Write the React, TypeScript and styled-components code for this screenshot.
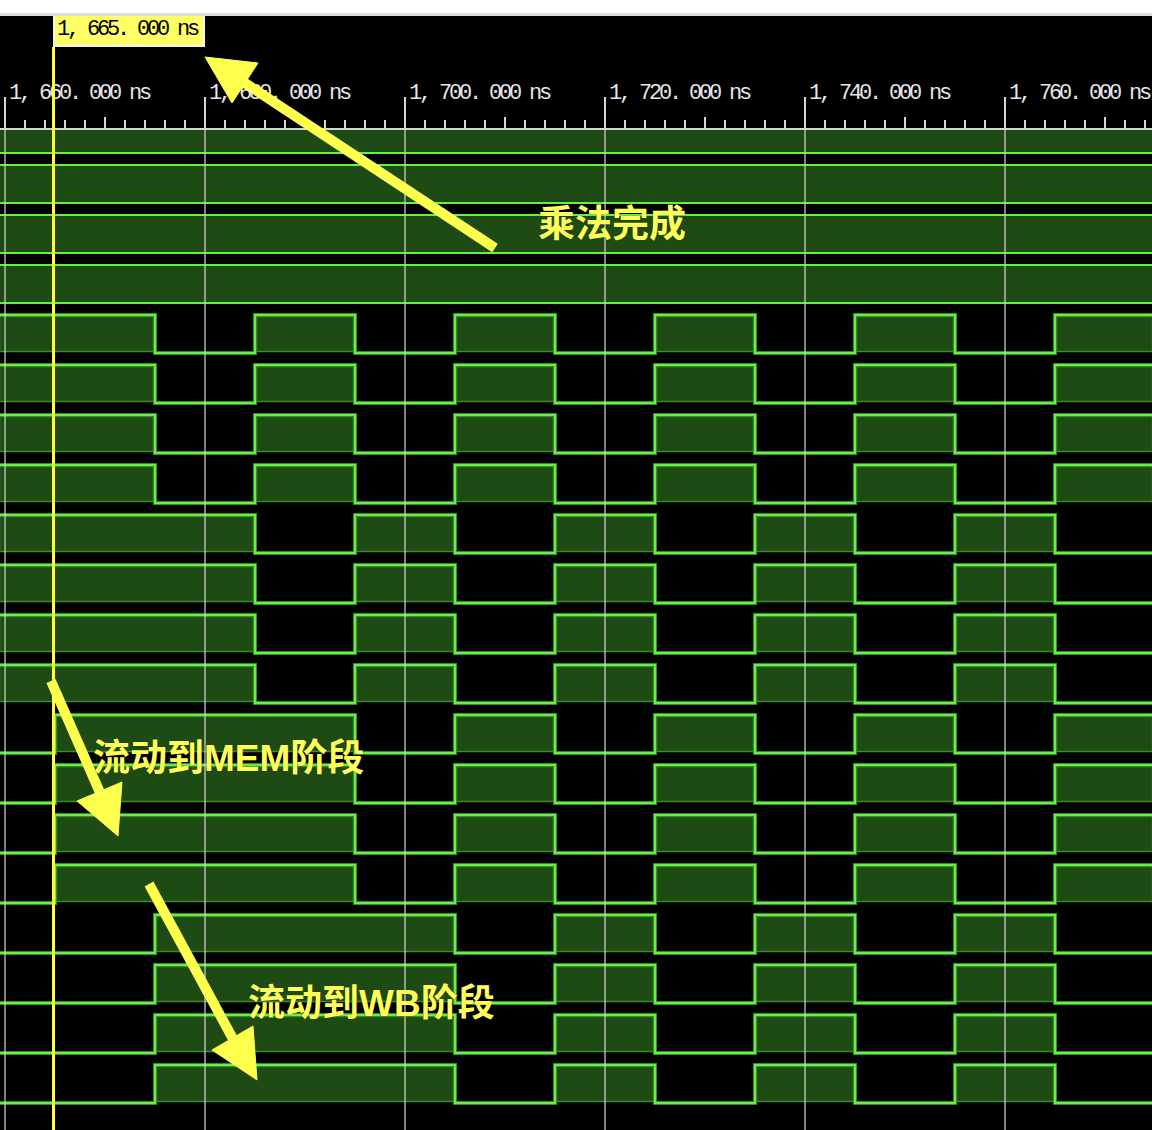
import React from 'react';
import styled, { createGlobalStyle } from 'styled-components';

const W = 1152;
const HI = 7;
const LO = 45;
const FILL = '#1e4a14';
const EDGE = '#3b8b2e';
const LINE = '#62f23f';

const GlobalStyle = createGlobalStyle`
  html, body {
    margin: 0;
    padding: 0;
    background: #ffffff;
  }
  body {
    font-family: "Liberation Sans", "Noto Sans CJK SC", sans-serif;
  }
`;

const Page = styled.div`
  position: relative;
  width: ${W}px;
  height: 1130px;
  overflow: hidden;
  display: flex;
  flex-direction: column;
`;

const TopBar = styled.div`
  height: 13px;
  background: #ffffff;
  border-bottom: 3px solid #dcdcdc;
`;

const Viewer = styled.div`
  position: relative;
  flex: 1;
  background: #000000;
  display: flex;
  flex-direction: column;
  overflow: hidden;
`;

const Ruler = styled.div`
  height: 112px;
  display: flex;
  padding-left: 4px;
  border-bottom: 2px solid #d6d6d6;
  overflow: hidden;
`;

const Segment = styled.div`
  flex: 0 0 200px;
  box-sizing: border-box;
  padding-top: 67px;
  padding-left: 5px;
  background:
    linear-gradient(#d6d6d6, #d6d6d6) 0 100% / 2px 31px no-repeat,
    linear-gradient(#d6d6d6, #d6d6d6) 100px 100% / 2px 11px no-repeat,
    repeating-linear-gradient(to right, #d6d6d6 0 2px, transparent 2px 20px) 0 100% / 100% 8px no-repeat;
`;

const TimeText = styled.div`
  font-family: "Liberation Mono", monospace;
  font-size: 22px;
  line-height: 22px;
  letter-spacing: -3.2px;
  color: #e6e6e6;
  white-space: pre;
`;

const Waves = styled.div`
  position: relative;
  display: flex;
  flex-direction: column;
  flex: 1;
`;

const Grid = styled.div`
  position: absolute;
  inset: 0;
  pointer-events: none;
  background: linear-gradient(to right, rgba(215, 215, 215, 0.6) 0 2px, transparent 2px)
    4px 0 / 200px 100% repeat-x;
`;

const RowSvg = styled.svg`
  display: block;
  flex: 0 0 auto;
`;

const CursorLine = styled.div`
  position: absolute;
  left: 52px;
  top: 31px;
  bottom: 0;
  width: 3px;
  background: #ffff3c;
`;

const CursorLabel = styled.div`
  position: absolute;
  left: 53px;
  top: 0;
  width: 152px;
  height: 31px;
  box-sizing: border-box;
  border: 2px solid #f2f2f2;
  border-top: none;
  background: #ffff66;
  padding-left: 2px;
  padding-top: 3px;
`;

const CursorText = styled(TimeText)`
  color: #000000;
`;

const Overlay = styled.svg`
  position: absolute;
  left: 0;
  top: 0;
  pointer-events: none;
`;

const Note = styled.div<{ $x: number; $y: number }>`
  position: absolute;
  left: ${p => p.$x}px;
  top: ${p => p.$y}px;
  font-family: "Liberation Sans", "Noto Sans CJK SC", sans-serif;
  font-weight: 700;
  font-size: 37px;
  line-height: 1;
  color: #ffff5a;
  white-space: nowrap;
  text-shadow: 0 0 1px rgba(0, 0, 0, 0.7);
`;

type Wave = { kind: 'bus' } | { kind: 'bit'; start: 0 | 1; edges: number[] };

const T = [155, 255, 355, 455, 555, 655, 755, 855, 955, 1055];

const bus: Wave = { kind: 'bus' };
const a: Wave = { kind: 'bit', start: 1, edges: T };
const b: Wave = { kind: 'bit', start: 1, edges: T.slice(1) };
const c: Wave = { kind: 'bit', start: 0, edges: [55, ...T.slice(2)] };
const d: Wave = { kind: 'bit', start: 0, edges: [155, ...T.slice(3)] };

const rows: Wave[] = [
  bus, bus, bus, bus,
  a, a, a, a,
  b, b, b, b,
  c, c, c, c,
  d, d, d, d,
];

const ticks = ['1, 660. 000 ns', '1, 680. 000 ns', '1, 700. 000 ns', '1, 720. 000 ns', '1, 740. 000 ns', '1, 760. 000 ns'];

const WaveRow: React.FC<{ wave: Wave; clip?: number }> = ({ wave, clip = 0 }) => {
  const h = 50 - clip;
  if (wave.kind === 'bus') {
    return (
      <RowSvg width={W} height={h} viewBox={`0 ${clip} ${W} ${h}`}>
        <rect x={-2} y={HI} width={W + 4} height={LO - HI} fill={FILL} stroke={EDGE} strokeWidth={1} />
        <line x1={0} x2={W} y1={HI} y2={HI} stroke={LINE} strokeWidth={2} />
        <line x1={0} x2={W} y1={LO} y2={LO} stroke={LINE} strokeWidth={2} />
      </RowSvg>
    );
  }

  const highs: [number, number][] = [];
  const pts: string[] = [];
  let level = wave.start;
  let from = -2;
  pts.push(`${from},${level ? HI : LO}`);
  for (const e of wave.edges) {
    if (level) highs.push([from, e]);
    pts.push(`${e},${level ? HI : LO}`);
    level = level ? 0 : 1;
    pts.push(`${e},${level ? HI : LO}`);
    from = e;
  }
  if (level) highs.push([from, W + 2]);
  pts.push(`${W + 2},${level ? HI : LO}`);

  return (
    <RowSvg width={W} height={h} viewBox={`0 ${clip} ${W} ${h}`}>
      {highs.map(([x0, x1]) => (
        <rect key={x0} x={x0 + 1.5} y={HI + 1.5} width={x1 - x0 - 3} height={LO - HI - 3} fill={FILL} stroke={EDGE} strokeWidth={1.5} />
      ))}
      <polyline points={pts.join(' ')} fill="none" stroke={EDGE} strokeWidth={4} />
      <polyline points={pts.join(' ')} fill="none" stroke={LINE} strokeWidth={2} />
    </RowSvg>
  );
};

const Arrow: React.FC<{ from: [number, number]; head: [number, number][] }> = ({ from, head }) => {
  const [tip, p1, p2] = head;
  const mx = (p1[0] + p2[0]) / 2;
  const my = (p1[1] + p2[1]) / 2;
  return (
    <g fill="#ffff4d" stroke="#ffff4d">
      <line x1={from[0]} y1={from[1]} x2={mx} y2={my} strokeWidth={10} />
      <polygon points={`${tip[0]},${tip[1]} ${p1[0]},${p1[1]} ${p2[0]},${p2[1]}`} strokeWidth={1} />
    </g>
  );
};

export default function App() {
  return (
    <>
      <GlobalStyle />
      <Page>
        <TopBar />
        <Viewer>
          <Ruler>
            {ticks.map(t => (
              <Segment key={t}>
                <TimeText>{t}</TimeText>
              </Segment>
            ))}
          </Ruler>
          <Waves>
            {rows.map((w, i) => (
              <WaveRow key={i} wave={w} clip={i === 0 ? 22 : 0} />
            ))}
            <Grid />
          </Waves>
          <CursorLine />
          <CursorLabel>
            <CursorText>1, 665. 000 ns</CursorText>
          </CursorLabel>
        </Viewer>

        <Overlay width={W} height={1130}>
          <Arrow from={[495, 248]} head={[[205, 57], [258, 63], [232, 103]]} />
          <Arrow from={[51, 681]} head={[[118, 836], [77, 801], [122, 782]]} />
          <Arrow from={[149, 884]} head={[[257, 1080], [212, 1050], [253, 1026]]} />
        </Overlay>
        <Note $x={538} $y={206}>乘法完成</Note>
        <Note $x={93} $y={740}>流动到MEM阶段</Note>
        <Note $x={248} $y={985}>流动到WB阶段</Note>
      </Page>
    </>
  );
}
